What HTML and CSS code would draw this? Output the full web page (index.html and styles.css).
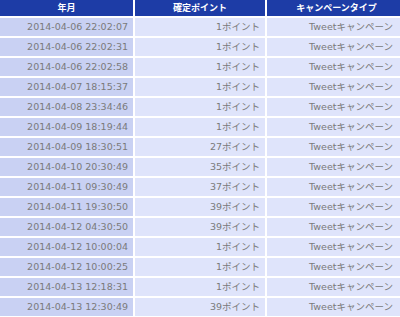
FILE: index.html
```html
<!DOCTYPE html>
<html lang="ja">
<head>
<meta charset="utf-8">
<link rel="stylesheet" href="styles.css">
</head>
<body>
<table class="points">
  <thead>
    <tr>
      <th class="c-date">年月</th>
      <th class="c-pt">確定ポイント</th>
      <th class="c-type">キャンペーンタイプ</th>
    </tr>
  </thead>
  <tbody>
    <tr><td class="d">2014-04-06 22:02:07</td><td>1ポイント</td><td class="t">Tweetキャンペーン</td></tr>
    <tr><td class="d">2014-04-06 22:02:31</td><td>1ポイント</td><td class="t">Tweetキャンペーン</td></tr>
    <tr><td class="d">2014-04-06 22:02:58</td><td>1ポイント</td><td class="t">Tweetキャンペーン</td></tr>
    <tr><td class="d">2014-04-07 18:15:37</td><td>1ポイント</td><td class="t">Tweetキャンペーン</td></tr>
    <tr><td class="d">2014-04-08 23:34:46</td><td>1ポイント</td><td class="t">Tweetキャンペーン</td></tr>
    <tr><td class="d">2014-04-09 18:19:44</td><td>1ポイント</td><td class="t">Tweetキャンペーン</td></tr>
    <tr><td class="d">2014-04-09 18:30:51</td><td>27ポイント</td><td class="t">Tweetキャンペーン</td></tr>
    <tr><td class="d">2014-04-10 20:30:49</td><td>35ポイント</td><td class="t">Tweetキャンペーン</td></tr>
    <tr><td class="d">2014-04-11 09:30:49</td><td>37ポイント</td><td class="t">Tweetキャンペーン</td></tr>
    <tr><td class="d">2014-04-11 19:30:50</td><td>39ポイント</td><td class="t">Tweetキャンペーン</td></tr>
    <tr><td class="d">2014-04-12 04:30:50</td><td>39ポイント</td><td class="t">Tweetキャンペーン</td></tr>
    <tr><td class="d">2014-04-12 10:00:04</td><td>1ポイント</td><td class="t">Tweetキャンペーン</td></tr>
    <tr><td class="d">2014-04-12 10:00:25</td><td>1ポイント</td><td class="t">Tweetキャンペーン</td></tr>
    <tr><td class="d">2014-04-13 12:18:31</td><td>1ポイント</td><td class="t">Tweetキャンペーン</td></tr>
    <tr><td class="d">2014-04-13 12:30:49</td><td>39ポイント</td><td class="t">Tweetキャンペーン</td></tr>
  </tbody>
</table>
</body>
</html>
```
FILE: styles.css
```css
html, body {
  margin: 0;
  padding: 0;
  background: #ffffff;
  overflow: hidden;
}

.points {
  border-collapse: separate;
  border-spacing: 2px;
  margin: -2px 0 0 -2px;
  table-layout: fixed;
  width: 408px;
  font-family: "DejaVu Sans", Verdana, "Noto Sans CJK JP", sans-serif;
  font-size: 9.5px;
}

.points th,
.points td {
  box-sizing: border-box;
  padding: 0 5px 0 0;
  white-space: nowrap;
  overflow: hidden;
}

.points th {
  background: #1d3ca6;
  color: #ffffff;
  font-weight: bold;
  font-size: 9px;
  text-align: center;
  height: 16px;
  line-height: 16px;
  padding: 0;
}

.c-date { width: 133px; }
.c-pt { width: 130px; }
.c-type { width: 139px; }

.points td {
  background: #dfe4fb;
  color: #7a7a7a;
  text-align: right;
  height: 18px;
  line-height: 18px;
}

.points td.d {
  background: #c9d1f3;
}

.points td.t {
  padding-right: 13px;
}
```
